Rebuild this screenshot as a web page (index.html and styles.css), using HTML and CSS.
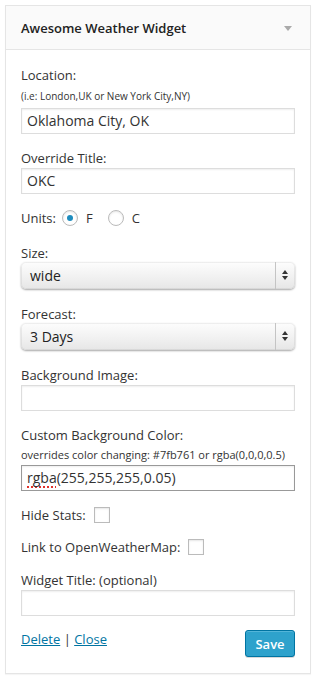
FILE: index.html
```html
<!DOCTYPE html>
<html lang="en">
<head>
    <meta charset="UTF-8">
    <meta name="viewport" content="width=device-width, initial-scale=1.0">
    <title>Awesome Weather Widget</title>
    <link rel="stylesheet" href="styles.css">
</head>
<body>
    <div class="widget">
        <div class="widget-top">
            <h4 class="widget-title">Awesome Weather Widget</h4>
            <span class="widget-toggle"></span>
        </div>

        <form class="widget-inside">
            <div class="field">
                <label class="label">Location:</label>
                <div class="hint hint-location">(i.e: London,UK or New York City,NY)</div>
                <div class="input input-after-hint">Oklahoma City, OK</div>
            </div>

            <div class="field">
                <label class="label">Override Title:</label>
                <div class="input">OKC</div>
            </div>

            <div class="field field-units">
                <div class="inline-row">
                    <span class="label">Units:</span>
                    <span class="radio checked"></span>
                    <span class="label radio-label">F</span>
                    <span class="radio radio-second"></span>
                    <span class="label radio-label">C</span>
                </div>
            </div>

            <div class="field field-select">
                <label class="label">Size:</label>
                <div class="select">
                    <span>wide</span>
                    <span class="select-arrows"></span>
                </div>
            </div>

            <div class="field field-select">
                <label class="label">Forecast:</label>
                <div class="select">
                    <span>3 Days</span>
                    <span class="select-arrows"></span>
                </div>
            </div>

            <div class="field">
                <label class="label">Background Image:</label>
                <div class="input"></div>
            </div>

            <div class="field">
                <label class="label">Custom Background Color:</label>
                <div class="hint hint-color">overrides color changing: #7fb761 or rgba(0,0,0,0.5)</div>
                <div class="input input-focus input-after-color"><span class="misspelled">rgba</span>(255,255,255,0.05)</div>
            </div>

            <div class="field field-check">
                <div class="inline-row">
                    <span class="label">Hide Stats:</span>
                    <span class="checkbox"></span>
                </div>
            </div>

            <div class="field">
                <div class="inline-row">
                    <span class="label">Link to OpenWeatherMap:</span>
                    <span class="checkbox"></span>
                </div>
            </div>

            <div class="field field-last">
                <label class="label">Widget Title: (optional)</label>
                <div class="input"></div>
            </div>

            <div class="widget-actions">
                <div class="links">
                    <a href="#">Delete</a> | <a href="#">Close</a>
                </div>
                <button type="button" class="button-primary">Save</button>
            </div>
        </form>
    </div>
</body>
</html>
```

FILE: styles.css
```css
* {
    margin: 0;
    padding: 0;
    box-sizing: border-box;
}

body {
    font-family: 'Open Sans', sans-serif;
    font-size: 13px;
    color: #333;
    background: #fff;
}

.widget {
    margin: 5px;
    border: 1px solid #e5e5e5;
    box-shadow: 0 1px 1px rgba(0, 0, 0, 0.04);
    background: #fff;
}

.widget-top {
    height: 44px;
    display: flex;
    align-items: center;
    justify-content: space-between;
    padding: 0 18px 0 15px;
    background: #fafafa;
    border-bottom: 1px solid #e5e5e5;
}

.widget-title {
    font-size: 13px;
    font-weight: 600;
    color: #222;
    padding-top: 1px;
}

.widget-toggle {
    width: 0;
    height: 0;
    border-left: 4px solid transparent;
    border-right: 4px solid transparent;
    border-top: 5px solid #aaa;
    margin-top: 2px;
}

.widget-inside {
    padding: 16px 15px 16px;
}

.field {
    margin-bottom: 15px;
}

.field-units {
    margin-bottom: 17px;
}

.field-select {
    margin-bottom: 16px;
}

.field-check {
    margin-bottom: 14px;
}

.field-last {
    margin-bottom: 14px;
}

.label {
    display: block;
    line-height: 18px;
    font-size: 13px;
}

.hint {
    font-size: 11px;
    line-height: 16px;
}

.hint-location {
    font-size: 10px;
    margin-top: 4px;
}

.hint-color {
    margin-top: 3px;
}

.input {
    height: 26px;
    margin-top: 1px;
    border: 1px solid #ddd;
    box-shadow: inset 0 1px 2px rgba(0, 0, 0, 0.07);
    padding: 0 5px;
    font-size: 14px;
    line-height: 24px;
    color: #333;
}

.input-after-hint {
    margin-top: 4px;
}

.input-after-color {
    margin-top: 2px;
}

.input-focus {
    border-color: #999;
}

.misspelled {
    text-decoration: underline dotted #e0322c;
    text-underline-offset: 3px;
    text-decoration-thickness: 2px;
}

.inline-row {
    display: flex;
    align-items: center;
    height: 18px;
}

.inline-row .label {
    display: inline-block;
}

.radio {
    width: 16px;
    height: 16px;
    border: 1px solid #bbb;
    border-radius: 50%;
    margin: 0 8px 0 6px;
    box-shadow: inset 0 1px 2px rgba(0, 0, 0, 0.1);
    display: flex;
    align-items: center;
    justify-content: center;
    background: #fff;
}

.radio.checked::after {
    content: "";
    width: 6px;
    height: 6px;
    border-radius: 50%;
    background: #1e8cbe;
}

.radio-second {
    margin-left: 15px;
}

.checkbox {
    width: 16px;
    height: 16px;
    border: 1px solid #bbb;
    box-shadow: inset 0 1px 2px rgba(0, 0, 0, 0.1);
    background: #fff;
    margin-left: 8px;
}

.select {
    position: relative;
    height: 27px;
    border-radius: 5px;
    background: linear-gradient(#fdfdfd, #f0f0f0 60%, #e6e6e6);
    box-shadow: 0 1px 2px rgba(0, 0, 0, 0.35), inset 0 0 0 1px rgba(0, 0, 0, 0.06);
    padding-left: 9px;
    font-size: 14px;
    line-height: 27px;
    color: #222;
}

.select-arrows {
    position: absolute;
    top: 0;
    right: 0;
    width: 20px;
    height: 100%;
    border-left: 1px solid #c4c4c4;
}

.select-arrows::before,
.select-arrows::after {
    content: "";
    position: absolute;
    left: 6px;
    border-left: 3.5px solid transparent;
    border-right: 3.5px solid transparent;
}

.select-arrows::before {
    top: 8px;
    border-bottom: 4px solid #333;
}

.select-arrows::after {
    top: 14px;
    border-top: 4px solid #333;
}

.widget-actions {
    display: flex;
    justify-content: space-between;
    align-items: flex-start;
}

.links {
    line-height: 18px;
    color: #333;
}

.links a {
    color: #0074a2;
    text-decoration: underline;
}

.button-primary {
    width: 50px;
    height: 27px;
    font-family: 'Open Sans', sans-serif;
    font-size: 13px;
    font-weight: 600;
    color: #fff;
    background: #2ea2cc;
    border: 1px solid #0074a2;
    border-radius: 3px;
    box-shadow: inset 0 1px 0 rgba(120, 200, 230, 0.5), 0 1px 0 rgba(0, 0, 0, 0.15);
    cursor: pointer;
}
```
